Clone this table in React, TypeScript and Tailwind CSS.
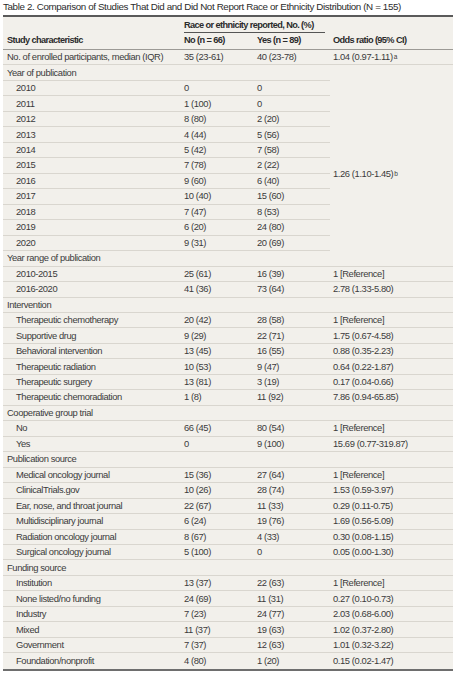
import React from "react";

type R = { label: string; no: string; yes: string; odds?: string; sup?: string; sub?: boolean; head?: boolean };

const FONT = { fontFamily: '"Liberation Sans", Arial, sans-serif' };

function Row({ r, partial }: { r: R; partial?: boolean }) {
  return (
    <div className="flex h-[15.47px] items-center border-b border-[#d9d6cf]">
      <div className={`w-[178px] shrink-0 whitespace-nowrap ${r.sub ? "pl-[13px]" : "pl-[4px]"}`}>{r.label}</div>
      <div className="w-[73px] shrink-0 whitespace-nowrap pl-[3px]">{r.no}</div>
      <div className="w-[76px] shrink-0 whitespace-nowrap pl-[3px]">{r.yes}</div>
      {!partial && (
        <div className="flex-1 whitespace-nowrap pl-[3px]">
          {r.odds}
          {r.sup && <sup className="text-[6.5px] relative -top-[1px] ml-[1px]">{r.sup}</sup>}
        </div>
      )}
    </div>
  );
}

const years: R[] = [
  { label: "Year of publication", no: "", yes: "" },
  { label: "2010", no: "0", yes: "0", sub: true },
  { label: "2011", no: "1 (100)", yes: "0", sub: true },
  { label: "2012", no: "8 (80)", yes: "2 (20)", sub: true },
  { label: "2013", no: "4 (44)", yes: "5 (56)", sub: true },
  { label: "2014", no: "5 (42)", yes: "7 (58)", sub: true },
  { label: "2015", no: "7 (78)", yes: "2 (22)", sub: true },
  { label: "2016", no: "9 (60)", yes: "6 (40)", sub: true },
  { label: "2017", no: "10 (40)", yes: "15 (60)", sub: true },
  { label: "2018", no: "7 (47)", yes: "8 (53)", sub: true },
  { label: "2019", no: "6 (20)", yes: "24 (80)", sub: true },
  { label: "2020", no: "9 (31)", yes: "20 (69)", sub: true },
];

const rest: R[] = [
  { label: "Year range of publication", no: "", yes: "" },
  { label: "2010-2015", no: "25 (61)", yes: "16 (39)", odds: "1 [Reference]", sub: true },
  { label: "2016-2020", no: "41 (36)", yes: "73 (64)", odds: "2.78 (1.33-5.80)", sub: true },
  { label: "Intervention", no: "", yes: "" },
  { label: "Therapeutic chemotherapy", no: "20 (42)", yes: "28 (58)", odds: "1 [Reference]", sub: true },
  { label: "Supportive drug", no: "9 (29)", yes: "22 (71)", odds: "1.75 (0.67-4.58)", sub: true },
  { label: "Behavioral intervention", no: "13 (45)", yes: "16 (55)", odds: "0.88 (0.35-2.23)", sub: true },
  { label: "Therapeutic radiation", no: "10 (53)", yes: "9 (47)", odds: "0.64 (0.22-1.87)", sub: true },
  { label: "Therapeutic surgery", no: "13 (81)", yes: "3 (19)", odds: "0.17 (0.04-0.66)", sub: true },
  { label: "Therapeutic chemoradiation", no: "1 (8)", yes: "11 (92)", odds: "7.86 (0.94-65.85)", sub: true },
  { label: "Cooperative group trial", no: "", yes: "" },
  { label: "No", no: "66 (45)", yes: "80 (54)", odds: "1 [Reference]", sub: true },
  { label: "Yes", no: "0", yes: "9 (100)", odds: "15.69 (0.77-319.87)", sub: true },
  { label: "Publication source", no: "", yes: "" },
  { label: "Medical oncology journal", no: "15 (36)", yes: "27 (64)", odds: "1 [Reference]", sub: true },
  { label: "ClinicalTrials.gov", no: "10 (26)", yes: "28 (74)", odds: "1.53 (0.59-3.97)", sub: true },
  { label: "Ear, nose, and throat journal", no: "22 (67)", yes: "11 (33)", odds: "0.29 (0.11-0.75)", sub: true },
  { label: "Multidisciplinary journal", no: "6 (24)", yes: "19 (76)", odds: "1.69 (0.56-5.09)", sub: true },
  { label: "Radiation oncology journal", no: "8 (67)", yes: "4 (33)", odds: "0.30 (0.08-1.15)", sub: true },
  { label: "Surgical oncology journal", no: "5 (100)", yes: "0", odds: "0.05 (0.00-1.30)", sub: true },
  { label: "Funding source", no: "", yes: "" },
  { label: "Institution", no: "13 (37)", yes: "22 (63)", odds: "1 [Reference]", sub: true },
  { label: "None listed/no funding", no: "24 (69)", yes: "11 (31)", odds: "0.27 (0.10-0.73)", sub: true },
  { label: "Industry", no: "7 (23)", yes: "24 (77)", odds: "2.03 (0.68-6.00)", sub: true },
  { label: "Mixed", no: "11 (37)", yes: "19 (63)", odds: "1.02 (0.37-2.80)", sub: true },
  { label: "Government", no: "7 (37)", yes: "12 (63)", odds: "1.01 (0.32-3.22)", sub: true },
  { label: "Foundation/nonprofit", no: "4 (80)", yes: "1 (20)", odds: "0.15 (0.02-1.47)", sub: true },
];

export default function App() {
  return (
    <div className="w-[456px] h-[675px] bg-white pl-[3px] pr-[3px] text-[#3b3b3b]" style={FONT}>
      <div className="h-[15px] flex items-center text-[9.8px] tracking-[-0.37px] text-[#2b2b2b] whitespace-nowrap">
        Table 2. Comparison of Studies That Did and Did Not Report Race or Ethnicity Distribution (N = 155)
      </div>
      <div className="w-[450px] bg-[#f2f0eb] border-t-2 border-[#5a5a5a] border-b-2 border-b-[#6e6e6e] text-[9.4px] tracking-[-0.4px]">
        <div className="h-[16px] flex items-center">
          <div className="w-[178px] shrink-0" />
          <div className="w-[149px] shrink-0 pl-[3px] pr-[5px] h-full flex items-end">
            <div className="w-full border-b border-[#555] pb-[1px] font-bold text-[9.2px] tracking-[-0.6px] text-[#2b2b2b] whitespace-nowrap leading-[11px]">
              Race or ethnicity reported, No. (%)
            </div>
          </div>
        </div>
        <div className="h-[17px] flex items-center border-b border-[#9c9a95] font-bold text-[9.2px] tracking-[-0.6px] text-[#2b2b2b]">
          <div className="w-[178px] shrink-0 pl-[4px] whitespace-nowrap">Study characteristic</div>
          <div className="w-[73px] shrink-0 pl-[3px] whitespace-nowrap">No (n = 66)</div>
          <div className="w-[76px] shrink-0 pl-[3px] whitespace-nowrap">Yes (n = 89)</div>
          <div className="flex-1 pl-[3px] whitespace-nowrap">Odds ratio (95% CI)</div>
        </div>
        <Row r={{ label: "No. of enrolled participants, median (IQR)", no: "35 (23-61)", yes: "40 (23-78)", odds: "1.04 (0.97-1.11)", sup: "a" }} />
        <div className="flex">
          <div className="w-[327px] shrink-0">
            {years.map((r) => (
              <Row key={r.label} r={r} partial />
            ))}
          </div>
          <div className="flex-1 flex items-center pl-[3px] pt-[31px] whitespace-nowrap">
            <span>
              1.26 (1.10-1.45)<sup className="text-[6.5px] relative -top-[1px] ml-[1px]">b</sup>
            </span>
          </div>
        </div>
        {rest.map((r, i) => (
          <div key={i} className={i === rest.length - 1 ? "[&>div]:border-b-0" : ""}>
            <Row r={r} />
          </div>
        ))}
      </div>
    </div>
  );
}
